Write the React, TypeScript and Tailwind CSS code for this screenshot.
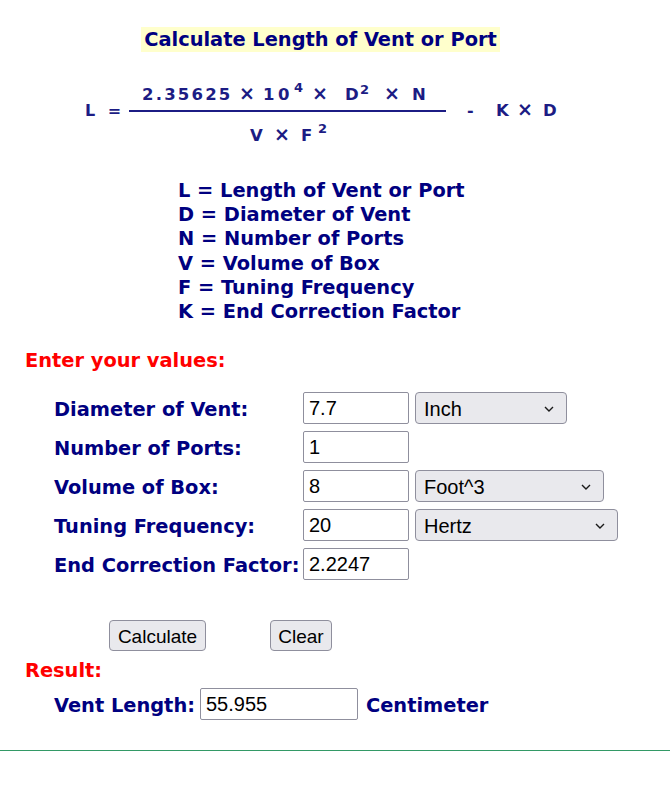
import React from 'react';

const navy = '#000080';

const rows = [
  { label: 'Diameter of Vent:', value: '7.7', unit: 'Inch', unitWidth: 'w-[152px]' },
  { label: 'Number of Ports:', value: '1' },
  { label: 'Volume of Box:', value: '8', unit: 'Foot^3', unitWidth: 'w-[189px]' },
  { label: 'Tuning Frequency:', value: '20', unit: 'Hertz', unitWidth: 'w-[203px]' },
  { label: 'End Correction Factor:', value: '2.2247' },
];

const defs = [
  'L = Length of Vent or Port',
  'D = Diameter of Vent',
  'N = Number of Ports',
  'V = Volume of Box',
  'F = Tuning Frequency',
  'K = End Correction Factor',
];

function Chevron() {
  return (
    <svg width="10" height="6" viewBox="0 0 10 6" className="pointer-events-none absolute right-[13px] top-[14px]">
      <path d="M1 1 L5 5 L9 1" fill="none" stroke="#1a1a1a" strokeWidth="1.4" />
    </svg>
  );
}

function UnitSelect({ value, width }: { value: string; width: string }) {
  return (
    <div className={`relative ${width} h-[32px]`}>
      <select
        defaultValue={value}
        className="h-full w-full appearance-none rounded-[4px] border border-[#8f8f9d] bg-[#e9e9ed] pl-[8px] pt-[1px] text-[20px] font-normal text-black outline-none font-['Liberation_Sans',sans-serif]"
      >
        <option>{value}</option>
      </select>
      <Chevron />
    </div>
  );
}

// the formula was an image in the source page
function Formula() {
  const y = (v: number) => v - 52;
  const t = { fontFamily: 'DejaVu Sans, sans-serif', fontWeight: 700, fill: '#1c1c84' } as const;
  return (
    <svg width="670" height="126" viewBox="0 0 670 126" className="block">
      <g style={t}>
        <text x="85" y={y(116)} fontSize="16" letterSpacing="3.5">L =</text>
        <text x="142" y={y(100)} fontSize="16.5" letterSpacing="2.2">2.35625</text>
        <text x="239" y={y(100)} fontSize="19">×</text>
        <text x="263" y={y(100)} fontSize="16.5" letterSpacing="3.5">10</text>
        <text x="294" y={y(92)} fontSize="13">4</text>
        <text x="312" y={y(100)} fontSize="19">×</text>
        <text x="345" y={y(100)} fontSize="16.5">D</text>
        <text x="360" y={y(94)} fontSize="13">2</text>
        <text x="384" y={y(100)} fontSize="19">×</text>
        <text x="412" y={y(100)} fontSize="16.5">N</text>
        <rect x="129" y={y(110)} width="317" height="2" fill="#1c1c84" />
        <text x="250" y={y(141)} fontSize="16.5">V</text>
        <text x="274" y={y(141)} fontSize="19">×</text>
        <text x="301" y={y(141)} fontSize="16.5">F</text>
        <text x="318" y={y(133)} fontSize="13">2</text>
        <text x="467" y={y(116)} fontSize="16">-</text>
        <text x="496" y={y(116)} fontSize="16.5">K</text>
        <text x="517" y={y(116)} fontSize="19">×</text>
        <text x="543" y={y(116)} fontSize="16.5">D</text>
      </g>
    </svg>
  );
}

export default function App() {
  return (
    <div className="min-h-[785px] bg-white font-['DejaVu_Sans',sans-serif] font-bold text-[19.4px]" style={{ color: navy }}>
      <div className="w-[641px] pt-[27px] flex justify-center">
        <h1 className="bg-[#ffffcc] px-[3px] text-[19.4px] leading-[25px] font-bold">
          Calculate Length of Vent or Port
        </h1>
      </div>

      <Formula />

      <div className="pl-[178px] pt-[1px] leading-[24.2px]">
        {defs.map((d) => (
          <div key={d}>{d}</div>
        ))}
      </div>

      <div className="mt-[25px] pl-[25px] leading-[24px] text-[#ff0000]">Enter your values:</div>

      <div className="mt-[19px] pl-[54px] flex flex-col gap-[7px]">
        {rows.map((r) => (
          <div key={r.label} className="flex items-center h-[32px] pt-[2px]">
            <div className="w-[249px]">{r.label}</div>
            <input
              defaultValue={r.value}
              className="-mt-[2px] h-[32px] w-[106px] rounded-[2px] border border-[#8f8f9d] bg-white px-[5px] pt-[1px] text-[20px] font-normal text-black outline-none font-['Liberation_Sans',sans-serif]"
            />
            {r.unit && (
              <div className="-mt-[2px] ml-[6px]">
                <UnitSelect value={r.unit} width={r.unitWidth!} />
              </div>
            )}
          </div>
        ))}
      </div>

      <div className="mt-[40px] pl-[109px] flex gap-[64px]">
        <button className="h-[31px] w-[97px] rounded-[4px] border border-[#8f8f9d] bg-[#e9e9ed] pt-[2px] text-[19px] font-normal text-black font-['Liberation_Sans',sans-serif]">
          Calculate
        </button>
        <button className="h-[31px] w-[62px] rounded-[4px] border border-[#8f8f9d] bg-[#e9e9ed] pt-[2px] text-[19px] font-normal text-black font-['Liberation_Sans',sans-serif]">
          Clear
        </button>
      </div>

      <div className="mt-[8px] pl-[25px] leading-[24px] text-[#ff0000]">Result:</div>

      <div className="mt-[5px] pl-[54px] flex items-center h-[32px] pt-[2px]">
        <span>Vent Length:</span>
        <input
          defaultValue="55.955"
          className="-mt-[2px] ml-[5px] h-[32px] w-[158px] rounded-[2px] border border-[#8f8f9d] bg-white px-[5px] pt-[1px] text-[20px] font-normal text-black outline-none font-['Liberation_Sans',sans-serif]"
        />
        <span className="ml-[8px]">Centimeter</span>
      </div>

      <div className="mt-[30px] h-px bg-[#339966]" />
    </div>
  );
}
